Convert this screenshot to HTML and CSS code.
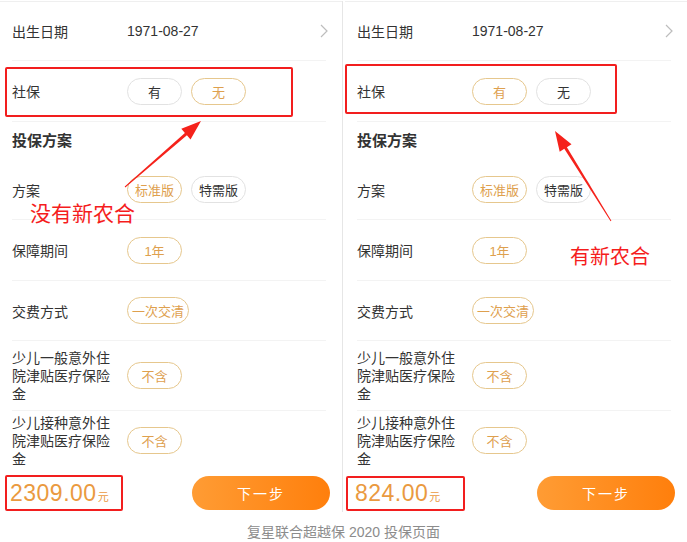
FILE: index.html
```html
<!DOCTYPE html>
<html>
<head>
  <meta charset="utf-8">
  <title>复星联合超越保 2020 投保页面</title>
  <link rel="stylesheet" href="styles.css">
</head>
<body>
  <div class="page">
    <div class="shots">
      <!-- without rural insurance -->
      <div class="phone">
        <div class="row birth">
          <span class="label">出生日期</span>
          <span class="value">1971-08-27</span>
          <svg class="chevron" width="8" height="14" viewBox="0 0 8 14"><polyline points="1,1 7,7 1,13" fill="none" stroke="#bdbdbd" stroke-width="1.2"/></svg>
        </div>
        <div class="row">
          <span class="label">社保</span>
          <span class="pill">有</span>
          <span class="pill on">无</span>
        </div>
        <div class="section">投保方案</div>
        <div class="row plan">
          <span class="label">方案</span>
          <span class="pill on">标准版</span>
          <span class="pill">特需版</span>
        </div>
        <div class="row">
          <span class="label">保障期间</span>
          <span class="pill on">1年</span>
        </div>
        <div class="row plan">
          <span class="label">交费方式</span>
          <span class="pill on wide">一次交清</span>
        </div>
        <div class="row tall">
          <span class="label multi">少儿一般意外住院津贴医疗保险金</span>
          <span class="pill on">不含</span>
        </div>
        <div class="row last">
          <span class="label multi">少儿接种意外住院津贴医疗保险金</span>
          <span class="pill on">不含</span>
        </div>
        <div class="footer">
          <span class="price">2309.00<small>元</small></span>
          <span class="next">下一步</span>
        </div>
      </div>

      <div class="divider"></div>

      <!-- with rural insurance -->
      <div class="phone">
        <div class="row birth">
          <span class="label">出生日期</span>
          <span class="value">1971-08-27</span>
          <svg class="chevron" width="8" height="14" viewBox="0 0 8 14"><polyline points="1,1 7,7 1,13" fill="none" stroke="#bdbdbd" stroke-width="1.2"/></svg>
        </div>
        <div class="row">
          <span class="label">社保</span>
          <span class="pill on">有</span>
          <span class="pill">无</span>
        </div>
        <div class="section">投保方案</div>
        <div class="row plan">
          <span class="label">方案</span>
          <span class="pill on">标准版</span>
          <span class="pill">特需版</span>
        </div>
        <div class="row">
          <span class="label">保障期间</span>
          <span class="pill on">1年</span>
        </div>
        <div class="row plan">
          <span class="label">交费方式</span>
          <span class="pill on wide">一次交清</span>
        </div>
        <div class="row tall">
          <span class="label multi">少儿一般意外住院津贴医疗保险金</span>
          <span class="pill on">不含</span>
        </div>
        <div class="row last">
          <span class="label multi">少儿接种意外住院津贴医疗保险金</span>
          <span class="pill on">不含</span>
        </div>
        <div class="footer">
          <span class="price">824.00<small>元</small></span>
          <span class="next">下一步</span>
        </div>
      </div>
    </div>

    <div class="caption">复星联合超越保 2020 投保页面</div>

    <!-- red annotations drawn over the screenshots -->
    <div class="mark box-left"></div>
    <div class="mark box-right"></div>
    <div class="mark price-left"></div>
    <div class="mark price-right"></div>
    <svg class="arrows" width="687" height="512" viewBox="0 0 687 512">
      <polygon fill="#f5221b" points="124.7,186.6 184.9,133.0 181.3,128.8 201,121 190.5,139.4 186.9,135.2 125.3,187.4"/>
      <polygon fill="#f5221b" points="610.6,221.3 564.3,148.8 559.7,151.7 555,131 571.5,144.3 566.9,147.2 611.4,220.7"/>
    </svg>
    <div class="note note-left">没有新农合</div>
    <div class="note note-right">有新农合</div>
  </div>
</body>
</html>
```

FILE: styles.css
```css
body {
  margin: 0;
  background: #fff;
  font-family: 'Liberation Sans', 'Noto Sans CJK SC', sans-serif;
  color: #333;
}

.page {
  position: relative;
  width: 687px;
  height: 542px;
  overflow: hidden;
}

.shots {
  display: flex;
  padding-top: 1px;
  height: 511px;
}

.phone {
  width: 342px;
  border-top: 1px solid #efefef;
  background: #fff;
}

.divider {
  width: 1px;
  margin-right: 2px;
  background: #e6e6e6;
}

.row {
  display: flex;
  align-items: center;
  height: 60px;
  margin: 0 16px 0 12px;
  border-bottom: 1px solid #f3f3f3;
  font-size: 14px;
}

.row.birth {
  height: 58px;
}

.row.plan {
  height: 59px;
}

.row.tall {
  height: 69px;
}

.row.last {
  height: 59px;
  border-bottom: none;
}

.label {
  width: 115px;
  flex-shrink: 0;
}

.label.multi {
  width: 100px;
  margin-right: 15px;
  line-height: 18px;
}

.value {
  flex: 1;
  font-size: 14px;
}

.chevron {
  margin-right: -2px;
}

.pill {
  display: inline-flex;
  align-items: center;
  justify-content: center;
  box-sizing: border-box;
  width: 55px;
  height: 27px;
  margin-right: 9px;
  border: 1px solid #e2e2e2;
  border-radius: 14px;
  font-size: 13px;
  color: #333;
}

.pill.on {
  border-color: #e6c78d;
  color: #dea04e;
}

.pill.wide {
  width: 62px;
}

.section {
  height: 38px;
  line-height: 38px;
  padding-left: 12px;
  font-size: 15px;
  font-weight: bold;
}

.footer {
  display: flex;
  align-items: flex-end;
  justify-content: space-between;
  height: 40px;
  padding: 0 12px 0 10px;
}

.price {
  font-size: 23px;
  letter-spacing: 0.5px;
  color: #ea9a3f;
  padding-bottom: 3px;
}

.price small {
  font-size: 11px;
  letter-spacing: 0;
  margin-left: 1px;
}

.next {
  display: flex;
  align-items: center;
  justify-content: center;
  width: 138px;
  height: 34px;
  border-radius: 17px;
  background: linear-gradient(90deg, #ff9c34 0%, #ff7f0c 100%);
  color: #fff;
  font-size: 14px;
  letter-spacing: 2px;
}

.caption {
  padding-top: 9px;
  text-align: center;
  font-size: 14px;
  color: #8c8c8c;
}

.mark {
  position: absolute;
  border: 2px solid #f21e1e;
  border-radius: 2px;
}

.box-left {
  left: 5px;
  top: 67px;
  width: 284px;
  height: 46px;
}

.box-right {
  left: 345px;
  top: 64px;
  width: 268px;
  height: 46px;
}

.price-left {
  left: 5px;
  top: 475px;
  width: 114px;
  height: 32px;
}

.price-right {
  left: 346px;
  top: 476px;
  width: 115px;
  height: 31px;
}

.arrows {
  position: absolute;
  left: 0;
  top: 0;
}

.note {
  position: absolute;
  font-family: 'Noto Sans CJK SC', sans-serif;
  color: #f51d1d;
  line-height: 1;
}

.note-left {
  left: 30px;
  top: 202px;
  font-size: 21px;
}

.note-right {
  left: 570px;
  top: 246px;
  font-size: 20px;
}
```
